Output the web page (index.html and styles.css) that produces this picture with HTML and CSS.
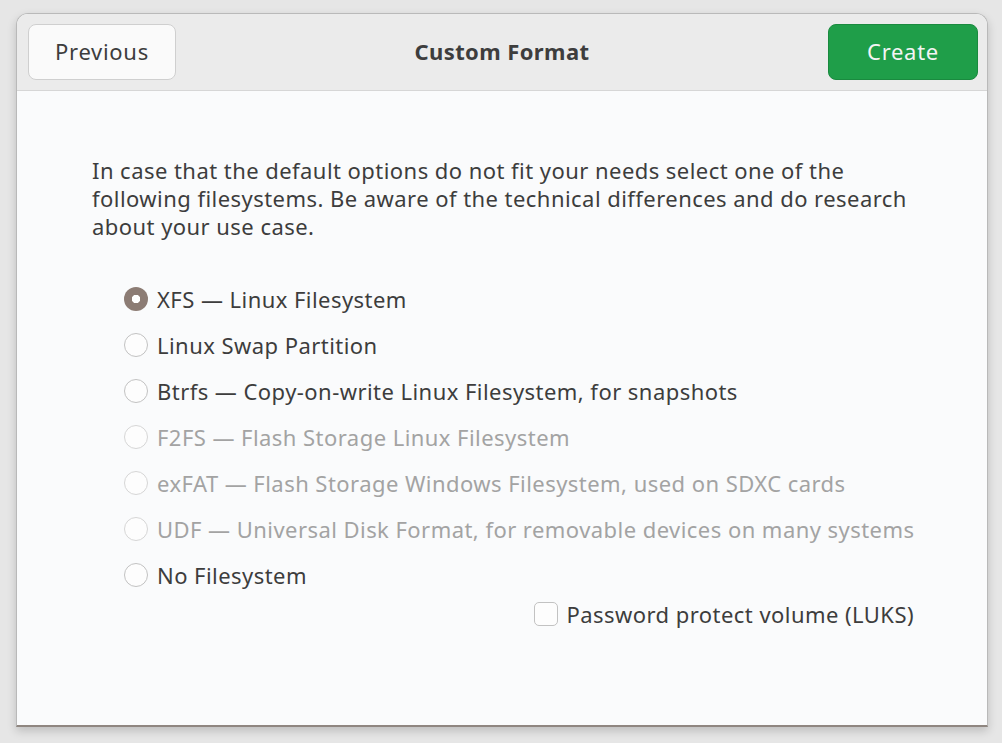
FILE: index.html
```html
<!DOCTYPE html>
<html>
<head>
<meta charset="utf-8">
<link rel="stylesheet" href="styles.css">
</head>
<body>
<div class="dialog">
  <div class="header">
    <button class="btn btn-prev">Previous</button>
    <div class="title">Custom Format</div>
    <button class="btn btn-create">Create</button>
  </div>
  <div class="content">
    <p class="intro">In case that the default options do not fit your needs select one of the<br>following filesystems. Be aware of the technical differences and do research<br>about your use case.</p>
    <div class="options">
      <div class="opt"><span class="radio checked"></span><span class="label">XFS — Linux Filesystem</span></div>
      <div class="opt"><span class="radio"></span><span class="label">Linux Swap Partition</span></div>
      <div class="opt"><span class="radio"></span><span class="label">Btrfs — Copy-on-write Linux Filesystem, for snapshots</span></div>
      <div class="opt disabled"><span class="radio"></span><span class="label">F2FS — Flash Storage Linux Filesystem</span></div>
      <div class="opt disabled"><span class="radio"></span><span class="label">exFAT — Flash Storage Windows Filesystem, used on SDXC cards</span></div>
      <div class="opt disabled"><span class="radio"></span><span class="label">UDF — Universal Disk Format, for removable devices on many systems</span></div>
      <div class="opt"><span class="radio"></span><span class="label">No Filesystem</span></div>
    </div>
    <div class="check-row">
      <span class="checkbox"></span><span class="label">Password protect volume (LUKS)</span>
    </div>
  </div>
</div>
</body>
</html>
```

FILE: styles.css
```css
html, body {
  margin: 0;
  padding: 0;
}
body {
  background: #e6e6e6;
  width: 1002px;
  height: 743px;
  overflow: hidden;
  font-family: "Noto Sans", "DejaVu Sans", sans-serif;
  color: #3d3d3d;
  padding: 13px 0 0 16px;
  box-sizing: border-box;
}
.dialog {
  width: 972px;
  height: 714px;
  background: #fafbfc;
  border: 1px solid #b9b9b9;
  border-bottom: 2px solid #8f8680;
  border-radius: 12px 12px 0 0;
  box-sizing: border-box;
  box-shadow: 0 4px 10px rgba(0,0,0,0.18);
  display: flex;
  flex-direction: column;
  overflow: hidden;
}
.header {
  height: 77px;
  flex: none;
  background: #ebebeb;
  border-bottom: 1px solid #d6d6d6;
  display: flex;
  align-items: center;
  justify-content: space-between;
  padding: 0 9px 1px 11px;
  box-sizing: border-box;
}
.btn {
  height: 56px;
  border-radius: 8px;
  font-family: inherit;
  font-size: 22px;
  letter-spacing: 0.7px;
  box-sizing: border-box;
  padding: 0 0 1px 0;
}
.btn-prev {
  width: 148px;
  background: #fafafa;
  border: 1px solid #cfcfcf;
  color: #3d3d3d;
}
.btn-create {
  width: 150px;
  background: #1f9e49;
  border: 1px solid #1a8a3f;
  color: #f4f4f4;
}
.title {
  font-weight: bold;
  font-size: 22px;
  letter-spacing: 0.4px;
  color: #3d3d3d;
  margin-top: -1px;
}
.content {
  padding: 0 73px 0 75px;
  font-size: 22px;
  letter-spacing: 0.45px;
}
.intro {
  margin: 65px 0 0 0;
  line-height: 28px;
  white-space: nowrap;
}
.options {
  margin-top: 36px;
  display: flex;
  flex-direction: column;
  padding-left: 32px;
}
.opt {
  height: 46px;
  display: flex;
  align-items: center;
  gap: 9px;
  white-space: nowrap;
}
.opt.disabled {
  color: #a3a3a3;
}
.radio {
  width: 24px;
  height: 24px;
  border-radius: 50%;
  border: 1px solid #c2c2c2;
  box-sizing: border-box;
  background: #fdfdfd;
  flex: none;
}
.opt.disabled .radio {
  border-color: #d6d6d6;
}
.radio.checked {
  border: none;
  background: radial-gradient(circle, #ffffff 0 4px, #8c7c74 4.5px);
}
.check-row {
  display: flex;
  align-items: center;
  justify-content: flex-end;
  gap: 8px;
  height: 32px;
  white-space: nowrap;
}
.checkbox {
  width: 24px;
  height: 24px;
  border: 1px solid #c2c2c2;
  border-radius: 5px;
  box-sizing: border-box;
  background: #fdfdfd;
  flex: none;
}
```
